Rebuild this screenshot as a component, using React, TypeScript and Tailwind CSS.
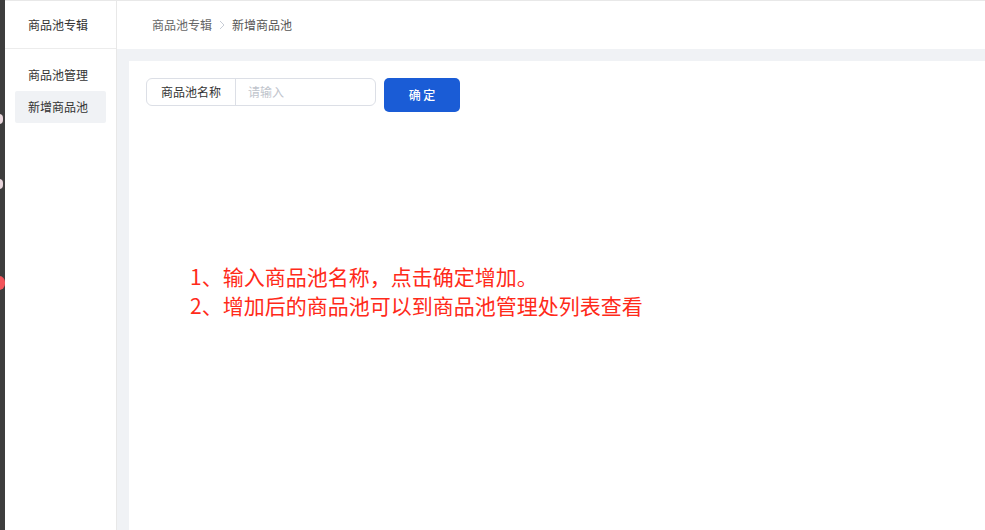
const font = { fontFamily: '"Noto Sans CJK SC", "Noto Sans", sans-serif' };

export default function App() {
  return (
    <div className="flex h-[530px] w-[985px] overflow-hidden bg-white text-xs" style={font}>
      {/* dark left edge with clipped dots */}
      <div className="relative w-[5px] shrink-0 overflow-hidden bg-[#3d3d3d]">
        <span className="absolute left-[-5px] top-[114px] h-[10px] w-[8px] rounded-full bg-[#e9d6dc]" />
        <span className="absolute left-[-5px] top-[179px] h-[10px] w-[8px] rounded-full bg-[#e9d6dc]" />
        <span className="absolute left-[-7px] top-[276px] h-[14px] w-[12px] rounded-full bg-[#f2555a]" />
      </div>

      {/* sidebar */}
      <aside className="flex w-[112px] shrink-0 flex-col border-r border-t border-[#e8e8e8]">
        <div className="flex h-[48px] items-center border-b border-[#ececec] pl-[23px] text-[#333]">
          商品池专辑
        </div>
        <nav className="flex flex-col px-[10px] pt-[10px] text-[#333]">
          <div className="flex h-[32px] items-center pl-[13px]">商品池管理</div>
          <div className="flex h-[32px] items-center rounded-[2px] bg-[#f0f2f5] pl-[13px]">新增商品池</div>
        </nav>
      </aside>

      {/* main */}
      <main className="flex flex-1 flex-col border-t border-[#e8e8e8] bg-[#f0f2f5]">
        <header className="flex h-[48px] shrink-0 items-center gap-[6px] bg-white pl-[35px] text-[#666]">
          <span>商品池专辑</span>
          <svg width="8" height="10" viewBox="0 0 8 10" fill="none">
            <path d="M2 1l4 4-4 4" stroke="#c8cdd6" strokeWidth="1" />
          </svg>
          <span className="text-[#555]">新增商品池</span>
        </header>
        <div className="flex-1 pl-[12px] pt-[12px]">
          <div className="h-full bg-white pl-[17px] pt-[17px]">
            <div className="flex items-start gap-[8px]">
              <div className="flex h-[28px] w-[230px] items-stretch rounded-[6px] border border-[#dcdfe6]">
                <div className="flex w-[89px] items-center justify-center border-r border-[#dcdfe6] text-[#333]">
                  商品池名称
                </div>
                <input
                  placeholder="请输入"
                  className="min-w-0 flex-1 bg-transparent pl-[12px] text-xs text-[#333] outline-none placeholder:text-[#c0c4cc]"
                  style={font}
                />
              </div>
              <button className="h-[34px] w-[76px] rounded-[5px] bg-[#1a5cd6] text-xs font-medium text-white">
                确&nbsp;定
              </button>
            </div>
            <div className="mt-[150px] pl-[44px] text-[21px] leading-[29px] text-[#ff2a1a]">
              <p>1、输入商品池名称，点击确定增加。</p>
              <p>2、增加后的商品池可以到商品池管理处列表查看</p>
            </div>
          </div>
        </div>
      </main>
    </div>
  );
}
